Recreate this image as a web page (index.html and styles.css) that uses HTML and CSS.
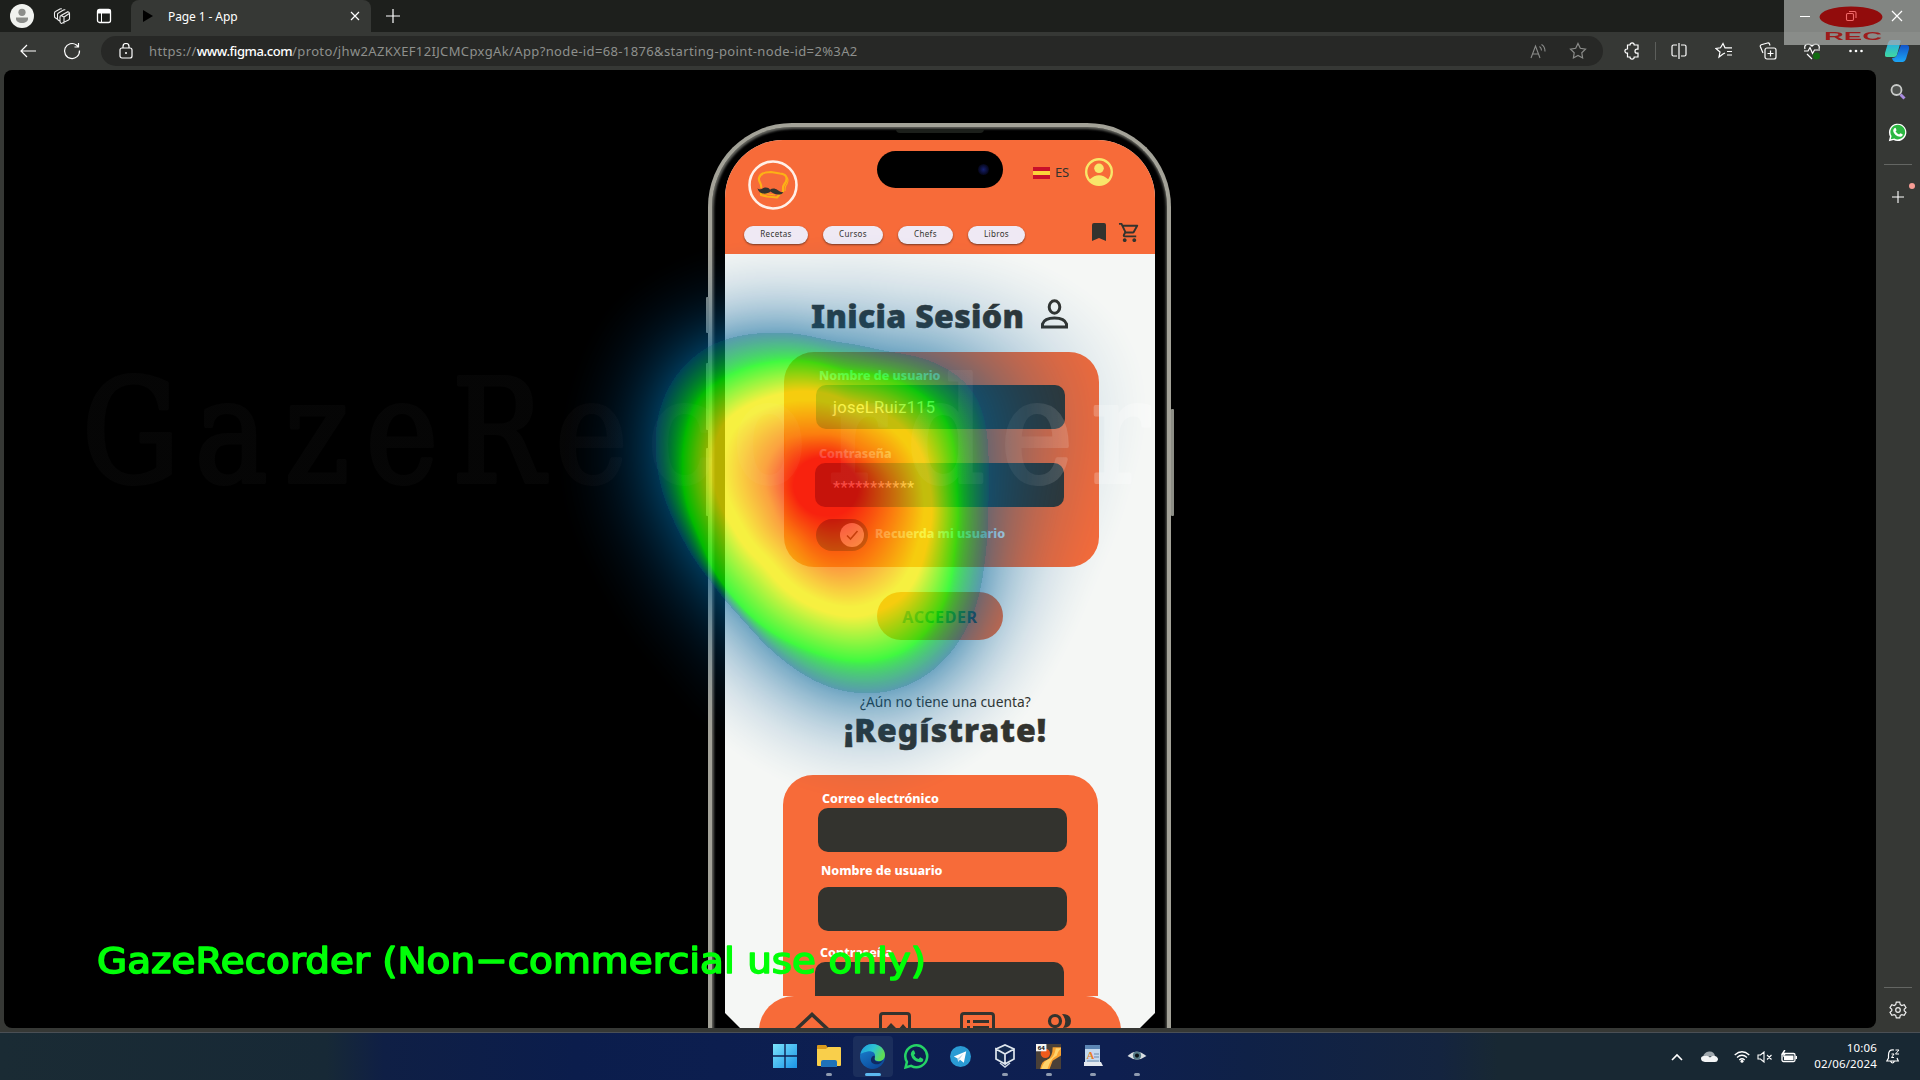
FILE: index.html
```html
<!DOCTYPE html>
<html lang="es">
<head>
<meta charset="utf-8">
<title>Page 1 - App</title>
<link rel="stylesheet" href="styles.css">
</head>
<body>
<div class="desktop">
  <header class="tabbar">
    <svg class="ic avatar" width="24" height="24" viewBox="0 0 24 24"><circle cx="12" cy="12" r="12" fill="#f0f2ef"/><circle cx="12" cy="8.3" r="3.6" fill="#8b8d8a"/><path d="M6 13.5h12v1.5c0 2.300-2.500 4-6 4s-6-1.700-6-4z" fill="#8b8d8a"/></svg>
    <svg class="ic" width="18" height="18" viewBox="0 0 18 18"><path d="M5 12.500l-2.500-1.500q-1-.5-1-1.500V6q0-1 1-1.500L7 2q1-.5 1.800 0M7.500 14.500L5.500 13.300q-1-.5-1-1.500V7.500q0-1 1-1.500L10.500 3q1-.5 1.800 0M8 8.500q-1 .5-1 1.500v4.500q0 1.500 1.500 2L15.500 13q1-.5 1-1.500V6.500q0-1.500-1.500-1.800zM8 8.500l3 1.500v6.500M11 10l5.300-3.500" fill="none" stroke="#eee" stroke-width="1.100"/></svg>
    <svg class="ic" width="16" height="16" viewBox="0 0 16 16"><rect x="1.500" y="1.500" width="13" height="13" rx="2" fill="none" stroke="#fff" stroke-width="1.300"/><path d="M1.500 1.500h13v4h-13z" fill="#fff"/><path d="M5.500 5v9" stroke="#fff"/></svg>
    <div class="tab">
      <svg width="10" height="12" viewBox="0 0 10 12"><path d="M0 0l10 6-10 6z" fill="#000"/></svg>
      <span class="tab-title">Page 1 - App</span>
      <svg width="10" height="10" viewBox="0 0 10 10"><path d="M1 1l8 8M9 1l-8 8" stroke="#fff" stroke-width="1.200"/></svg>
    </div>
    <svg class="newtab" width="14" height="14" viewBox="0 0 14 14"><path d="M7 0v14M0 7h14" stroke="#fff" stroke-width="1.200"/></svg>
  </header>

  <div class="toolbar">
    <svg width="16" height="14" viewBox="0 0 16 14"><path d="M16 7H1M7 1L1 7l6 6" fill="none" stroke="#fff" stroke-width="1.200"/></svg>
    <svg class="reload" width="18" height="18" viewBox="0 0 18 18"><path d="M16.500 8.500a7.500 7.500 0 1 1-3-5.500L15 4.500M15.500 1v4h-4" fill="none" stroke="#fff" stroke-width="1.200"/></svg>
    <div class="address">
      <svg width="14" height="16" viewBox="0 0 14 16"><rect x="1" y="5" width="12" height="10" rx="2" fill="none" stroke="#fff" stroke-width="1.200"/><path d="M4 5V3.500a3 3 0 0 1 6 0V5" fill="none" stroke="#fff" stroke-width="1.200"/><circle cx="7" cy="10" r="1" fill="#fff"/></svg>
      <span class="url">https://<b>www.figma.com</b>/proto/jhw2AZKXEF12IJCMCpxgAk/App?node-id=68-1876&amp;starting-point-node-id=2%3A2</span>
      <svg width="17" height="16" viewBox="0 0 17 16"><path d="M1 15L5.500 3 10 15M2.700 11h5.700M9.500 3.500q2 1.500 2 4M11.500 1.500q3.500 2 3.500 7" fill="none" stroke="#8b8c8a" stroke-width="1.100"/></svg>
      <svg width="18" height="18" viewBox="0 0 18 18"><path d="M9 1.500l2.300 4.800 5.200.8-3.700 3.700.8 5.200L9 13.500 4.400 16l.8-5.200L1.500 7.100l5.200-.8z" fill="none" stroke="#8b8c8a" stroke-width="1.200"/></svg>
    </div>
    <div class="tools">
      <svg width="18" height="18" viewBox="0 0 18 18"><path d="M4.500 3H7a2.100 2.100 0 0 1 4.200 0H15v4.200h-1a2 2 0 0 0 0 4h1V15h-3.800a2.100 2.100 0 0 1-4.200 0H4.500v-3.800H4a2.100 2.100 0 0 1 0-4.200h.5z" fill="none" stroke="#fff" stroke-width="1.200"/></svg>
      <svg width="18" height="18" viewBox="0 0 18 18"><path d="M7 3H3.500Q2 3 2 4.500v8Q2 14 3.500 14H7M11 3h3.500Q16 3 16 4.500v8q0 1.500-1.500 1.500H11M9 1v16" fill="none" stroke="#fff" stroke-width="1.200"/></svg>
      <svg width="18" height="18" viewBox="0 0 18 18"><path d="M10 11l-2 1-4 3 1-5-4-3.500 4.500-.7L8 1.500l2 4.300h7M12 9.500h5M12 13h5" fill="none" stroke="#fff" stroke-width="1.200"/></svg>
      <svg width="18" height="18" viewBox="0 0 18 18"><rect x="6" y="6" width="11" height="11" rx="2" fill="none" stroke="#fff" stroke-width="1.200"/><path d="M11.500 8.500v6M8.500 11.500h6M4 11L1.300 4.500q-.3-1.300 1-1.800L8.500 1q1.500-.4 2 1l.5 1.500" fill="none" stroke="#fff" stroke-width="1.200"/></svg>
      <svg width="18" height="18" viewBox="0 0 18 18"><path d="M1 9h4l2-3.500 2.500 6L11.500 8H17M2 7C.5 2 6 .5 9 4c3-3.500 8.500-2 7 3M4 12l5 5" fill="none" stroke="#fff" stroke-width="1.200"/><circle cx="13.500" cy="14" r="3.500" fill="#106b10"/></svg>
      <svg width="18" height="18" viewBox="0 0 18 18"><circle cx="3.500" cy="9" r="1.300" fill="#fff"/><circle cx="9" cy="9" r="1.300" fill="#fff"/><circle cx="14.500" cy="9" r="1.300" fill="#fff"/></svg>
    </div>
    <i class="tool-divider"></i>
    <svg class="copilot" width="24" height="22" viewBox="0 0 24 22"><defs><linearGradient id="cp1" x1="0" y1="0" x2="0" y2="1"><stop offset="0" stop-color="#21a5f0"/><stop offset="1" stop-color="#40d8a0"/></linearGradient><linearGradient id="cp2" x1="0" y1="0" x2="0" y2="1"><stop offset="0" stop-color="#1253c8"/><stop offset="1" stop-color="#1ba5f5"/></linearGradient></defs><path d="M6 0h8q2 0 1.500 2L12 15q-.5 2-3 2H2q-3 0-2-4L3 3q1-3 3-3z" fill="url(#cp1)"/><path d="M16 5h5q4 0 3 4l-3 10q-1 3-3 3h-7q-3 0-4-4 4 0 5-3z" fill="url(#cp2)"/></svg>
  </div>

  <div class="middle">
    <main class="viewport">
      <div class="phone">
        <i class="side-btn b1"></i><i class="side-btn b2"></i><i class="side-btn b3"></i><i class="side-btn b4"></i>
        <i class="speaker"></i>
        <div class="screen">
          <div class="app-head">
            <div class="island"><i></i></div>
            <div class="head-top">
              <svg width="50" height="50" viewBox="0 0 50 50"><circle cx="25" cy="25" r="23.500" fill="#f76b39" stroke="#fff0e8" stroke-width="2.600"/><path d="M13 28c1.500-4-3-6-2-10 1.500-6 8-6 12-6l9 1.500c6 .5 7.500 3.500 6 8-1.500 3-3 3-3 7v4M13 30v5l6 1.500 10 1 4-5" fill="none" stroke="#fcb116" stroke-width="2.200" stroke-linejoin="round"/><path d="M36 15c4 2 5 5 3 9-2 2-2 4-2 7M13 33l14 2" fill="none" stroke="#fcb116" stroke-width="1.100"/><path d="M9.500 28c1.500 2.500 4 1 6 0 3-1 5.500 0 6.500 1.800 2-1.800 5-1.800 7.500.2 2 1.500 4 2.500 6 2-1.500 3.500-8.500 3.500-13-.5-4 3.500-12 3-13-3.500z" fill="#33332e"/></svg>
              <div class="lang"><i class="flag"></i><span>ES</span></div>
              <svg class="account" width="28" height="28" viewBox="0 0 28 28"><circle cx="14" cy="14" r="12.800" fill="#f76b39" stroke="#f8e66a" stroke-width="2.400"/><circle cx="14" cy="10.300" r="4.800" fill="#f8e66a"/><path d="M4.500 21.500q9.500-8.500 19 0-3.500 5.500-9.500 5.500t-9.500-5.500z" fill="#f8e66a"/></svg>
            </div>
            <nav class="pills">
              <span class="p1">Recetas</span><span class="p2">Cursos</span><span class="p3">Chefs</span><span class="p4">Libros</span>
              <svg class="bookmark" width="14" height="18" viewBox="0 0 14 18"><path d="M0 2q0-2 2-2h10q2 0 2 2v16l-7-3-7 3z" fill="#33332e"/></svg>
              <svg class="cart" width="23" height="23" viewBox="0 0 24 24"><path d="M15.550 13c.75 0 1.410-.41 1.750-1.030l3.580-6.490A.996.996 0 0 0 20.010 4H5.210l-.94-2H1v2h2l3.600 7.590-1.350 2.440C4.520 15.370 5.480 17 7 17h12v-2H7l1.100-2h7.450zM6.160 6h12.150l-2.760 5H8.530L6.160 6zM7 18c-1.100 0-1.990.9-1.990 2S5.900 22 7 22s2-.9 2-2-.9-2-2-2zm10 0c-1.100 0-1.990.9-1.990 2s.89 2 1.990 2 2-.9 2-2-.9-2-2-2z" fill="#33332e"/></svg>
            </nav>
          </div>
          <div class="app-body">
            <div class="title-row">
              <h1>Inicia Sesión</h1>
              <svg width="27" height="30" viewBox="0 0 27 30"><ellipse cx="13.500" cy="8" rx="5.300" ry="6.200" fill="none" stroke="#33332e" stroke-width="3"/><path d="M1.500 28v-3q2-6 12-6t12 6v3z" fill="none" stroke="#33332e" stroke-width="3"/></svg>
            </div>
            <section class="card login">
              <label class="l-user">Nombre de usuario</label>
              <div class="field f-user">joseLRuiz115</div>
              <label class="l-pass">Contraseña</label>
              <div class="field f-pass">***********</div>
              <div class="remember">
                <span class="toggle"><svg width="24" height="24" viewBox="0 0 24 24"><circle cx="12" cy="12" r="12" fill="#fff"/><path d="M7 12.500l3.500 3.500 7-8" fill="none" stroke="#33332e" stroke-width="1.600"/></svg></span>
                <span class="rem-text">Recuerda mi usuario</span>
              </div>
            </section>
            <div class="enter">ACCEDER</div>
            <p class="ask">¿Aún no tiene una cuenta?</p>
            <h2>¡Regístrate!</h2>
            <section class="card signup">
              <label class="l-mail">Correo electrónico</label>
              <div class="field f-mail"></div>
              <label class="l-name">Nombre de usuario</label>
              <div class="field f-name"></div>
              <label class="l-key">Contraseña</label>
              <div class="field f-key"></div>
            </section>
          </div>
          <nav class="dock">
            <svg class="d1" width="34" height="24" viewBox="0 0 34 24"><path d="M1 17.500L17 2.500l16 15" fill="none" stroke="#33332e" stroke-width="3.500"/><path d="M10 24l7-7 7 7z" fill="#f76b39"/></svg>
            <svg class="d2" width="32" height="24" viewBox="0 0 32 24"><path d="M1.500 24V4q0-2.500 2.500-2.500h24q2.500 0 2.500 2.500v20" fill="none" stroke="#33332e" stroke-width="3"/><path d="M4 20l8-9 7 7 5-6 6 7v5H4z" fill="#33332e"/></svg>
            <svg class="d3" width="35" height="24" viewBox="0 0 35 24"><path d="M1.500 24V4q0-2.500 2.500-2.500h27q2.500 0 2.500 2.500v20M7 9.500h3M13 9.500h16M7 15.500h3M13 15.500h16" fill="none" stroke="#33332e" stroke-width="3"/></svg>
            <svg class="d4" width="26" height="24" viewBox="0 0 26 24"><circle cx="8" cy="9" r="5.500" fill="none" stroke="#33332e" stroke-width="3.200"/><path d="M15 2q9 0 9 7t-8 7q5-7-1-14z" fill="#33332e"/></svg>
          </nav>
        </div>
      </div>
    </main>
    <aside class="sidebar">
      <svg class="s1" width="18" height="18" viewBox="0 0 18 18"><circle cx="7.500" cy="7" r="5" fill="#8c8e8c" fill-opacity=".3" stroke="#c9cbc9" stroke-width="1.800"/><path d="M11.500 11.500l4 4" stroke="#a98be0" stroke-width="3"/></svg>
      <svg class="s2" width="19" height="19" viewBox="0 0 24 24"><path d="M1 23l1.500-6A11 11 0 1 1 7 21.500z" fill="#fff"/><path d="M3.500 20.500l1-4A9.300 9.300 0 1 1 8 19.700z" fill="#2cb742"/><path d="M8 6.500q1.500-1 2 .5l.8 2q-.8 1-1.300 1.500 1.500 3 4.500 4l1.500-1.700 3 1.500q.3 3-3 3.200Q8 16.500 6.500 10q0-2 1.500-3.500z" fill="#fff"/></svg>
      <i class="rule r1"></i>
      <div class="plus"><svg width="12" height="12" viewBox="0 0 12 12"><path d="M6 0v12M0 6h12" stroke="#fff" stroke-width="1.100"/></svg><i></i></div>
      <i class="rule r2"></i>
      <svg class="gear" width="18" height="18" viewBox="0 0 18 18"><path d="M7.300 1.200h3.400l.6 2.400 1.500.9 2.400-.8L17 6.700 15.200 8.300v1.400l1.800 1.700-1.800 3-2.400-.8-1.500.9-.6 2.300H7.300l-.6-2.300-1.500-.9-2.400.8-1.800-3 1.800-1.700V8.300L1 6.700l1.800-3 2.400.8 1.500-.9z" fill="none" stroke="#eee" stroke-width="1.200"/><circle cx="9" cy="9" r="2.300" fill="none" stroke="#eee" stroke-width="1.200"/></svg>
    </aside>
  </div>

  <footer class="taskbar">
    <div class="apps">
      <div class="app"><svg width="24" height="24" viewBox="0 0 24 24"><defs><linearGradient id="w" x1="0" y1="0" x2="1" y2="1"><stop offset="0" stop-color="#7be3fb"/><stop offset="1" stop-color="#1a94e6"/></linearGradient></defs><path d="M0 0h11.300v11.300H0zM12.700 0H24v11.300H12.700zM0 12.700h11.300V24H0zM12.700 12.700H24V24H12.700z" fill="url(#w)"/></svg></div>
      <div class="app"><svg width="24" height="24" viewBox="0 0 24 24"><path d="M0 2q0-1 1-1h8l2 3v6H0z" fill="#d99a1c"/><path d="M0 5h9l2-2h12q1 0 1 1v17q0 1-1 1H1q-1 0-1-1z" fill="#f9cf4b"/><path d="M4 23v-5q0-2 2-2h12q2 0 2 2v5z" fill="#1f72b8"/></svg><i></i></div>
      <div class="app active"><svg width="25" height="25" viewBox="0 0 24 24"><defs><linearGradient id="e1" x1="0" y1="0" x2="1" y2=".4"><stop offset="0" stop-color="#1e9be0"/><stop offset=".55" stop-color="#2cc3d3"/><stop offset="1" stop-color="#5fdc55"/></linearGradient><linearGradient id="e2" x1="0" y1="0" x2=".6" y2="1"><stop offset="0" stop-color="#1b86d4"/><stop offset="1" stop-color="#0c4b9c"/></linearGradient></defs><circle cx="12" cy="12" r="12" fill="url(#e2)"/><path d="M.5 9.500C2 3 7 0 12 0c7 0 12 5 12 10.500 0 4-3 6-6 6-3.500 0-4.500-1.500-4-3 1-1.500 1-6-4-6.500C6 7 2 9 .5 9.500z" fill="url(#e1)"/><path d="M14 13.500q-.5 3.500 4 3.500 3 0 4.500-2-3 5-8 4.500-4.500-1-4-5 .5-3 3-3.500 1.500 1 .5 2.500z" fill="#0f2a63"/></svg><i></i></div>
      <div class="app"><svg width="25" height="25" viewBox="0 0 24 24"><path d="M1.500 22.500l1.300-5.300A10.500 10.500 0 1 1 6.800 21z" fill="none" stroke="#25d366" stroke-width="2.400"/><path d="M8 6.500q1.500-1 2 .5l.8 2q-.8 1-1.300 1.500 1.500 3 4.500 4l1.500-1.700 3 1.500q.3 3-3 3.200Q8 16.500 6.500 10q0-2 1.500-3.500z" fill="#25d366"/></svg></div>
      <div class="app"><svg width="21" height="21" viewBox="0 0 22 22"><circle cx="11" cy="11" r="11" fill="#2a9bd4"/><path d="M4 11l13-5.500-2.500 12-4-3-2 2-.5-3.500z" fill="#fff"/><path d="M8 13l6-5-4 6-1.500 2.500z" fill="#b9d8ea"/></svg></div>
      <div class="app"><svg width="20" height="24" viewBox="0 0 20 24"><path d="M1 5l9-4 9 4-9 5zM1 5v10l9 5V10zM19 5v10l-9 5" fill="#152b52" stroke="#dfe6ee" stroke-width="1.700"/><path d="M5 19l5 4 5-4" fill="none" stroke="#cfd9e6" stroke-width="1.500"/></svg><i></i></div>
      <div class="app"><svg width="25" height="25" viewBox="0 0 24 24"><path d="M0 0h24v24H0z" fill="#4a4038"/><circle cx="9" cy="9" r="4.500" fill="#f05a1c"/><path d="M24 3v8l-8 5-3 8H4q1-8 7-9 5-3 5-12z" fill="#f8a230"/><path d="M24 4q-3 3-4 7-6 3-9 13H5q3-9 9-10 4-3 5-10z" fill="#ffd36b"/><path d="M0 0h10v7H0z" fill="#f4f4f4"/><text x="5" y="6" text-anchor="middle" class="n64">64</text></svg><i></i></div>
      <div class="app"><svg width="20" height="24" viewBox="0 0 20 24"><path d="M2 1h15v19H2z" fill="#c4d9ee"/><path d="M2 1h15v4H2z" fill="#5c86b5"/><path d="M1 18h17l2 4H1z" fill="#e4e8ee"/><path d="M11 10h5M11 13h5M4 17h12" stroke="#6c8aaa"/><text x="7.500" y="15" text-anchor="middle" class="wp">A</text></svg><i></i></div>
      <div class="app"><svg width="20" height="12" viewBox="0 0 22 14"><path d="M0 7Q10-3 22 7 11 15 0 7z" fill="#d9dee2"/><circle cx="11" cy="6.500" r="4.800" fill="#557a86"/><circle cx="11" cy="6.500" r="2.400" fill="#0c1319"/></svg><i></i></div>
    </div>
    <div class="tray">
      <svg class="t1" width="12" height="8" viewBox="0 0 12 8"><path d="M1 7l5-5 5 5" fill="none" stroke="#fff" stroke-width="1.600"/></svg>
      <svg class="t2" width="17" height="11" viewBox="0 0 17 11"><path d="M2 6q1-5 6-5.500Q13 0 14 5z" fill="#9ea7ad"/><path d="M4 11q-4-.5-4-3.500T4 5q3-1 5 1.500Q11 4 14 5q3 1 3 3.500-.5 2.500-3 2.500z" fill="#f3f5f6"/></svg>
      <svg class="t3" width="16" height="12" viewBox="0 0 16 12"><path d="M.7 4Q8-2.500 15.300 4M3 6.500q5-4.500 10 0M5.300 9q2.700-2.500 5.400 0" fill="none" stroke="#fff" stroke-width="1.300"/><circle cx="8" cy="10.300" r="1.500" fill="#fff"/></svg>
      <svg class="t4" width="16" height="12" viewBox="0 0 16 12"><path d="M1 4h2.500L7 1v10L3.500 8H1zM10 4l4.500 4.500M14.500 4L10 8.500" fill="none" stroke="#fff" stroke-width="1.100"/></svg>
      <svg class="t5" width="17" height="13" viewBox="0 0 17 13"><rect x="1" y="3.500" width="13" height="8" rx="1.500" fill="none" stroke="#fff" stroke-width="1.300"/><path d="M3 5.500h9.500v4.500H3zM14.500 6H16v3h-1.500zM3 0L0 4.500h2.500L1.500 8 5 3.500H2.800L4.500 0z" fill="#fff"/></svg>
      <div class="clock"><span>10:06</span><span>02/06/2024</span></div>
      <svg class="t6" width="14" height="15" viewBox="0 0 14 15"><path d="M8 1Q2.500 0 2.500 6v3L.8 12h11.500L11 9M4.500 12q2 4 4 0" fill="none" stroke="#fff" stroke-width="1.200"/><path d="M5.500 5H8L5.500 8.500H8M9.500 1h3.500L9.500 5H13" fill="none" stroke="#fff"/></svg>
    </div>
  </footer>

  <canvas class="heatmap" width="700" height="640"></canvas>
  <svg class="watermark" width="1920" height="1080" viewBox="0 0 1920 1080">
    <defs>
      <linearGradient id="fade" gradientUnits="userSpaceOnUse" x1="640" y1="0" x2="1155" y2="0"><stop offset="0" stop-color="#fff" stop-opacity=".022"/><stop offset=".75" stop-color="#fff" stop-opacity=".06"/><stop offset="1" stop-color="#fff" stop-opacity=".35"/></linearGradient>
      <mask id="wmmask" maskUnits="userSpaceOnUse" x="0" y="340" width="1155" height="180"><rect x="0" y="340" width="1155" height="180" fill="url(#fade)"/></mask>
    </defs>
    <g mask="url(#wmmask)"><g transform="scale(.85 1)"><text y="482" class="wm" x="154 272 373 473 586 696 802 905 1008 1113 1220 1318">GazeRecorder</text></g></g>
    <text class="notice" x="97" y="973" textLength="829" lengthAdjust="spacingAndGlyphs" xml:space="preserve">GazeRecorder (Non−commercial use only)</text>
  </svg>

  <div class="window-ctl">
    <svg width="136" height="45" viewBox="0 0 136 45"><rect width="136" height="45" fill="#a9aba8" fill-opacity=".73"/><ellipse cx="67" cy="17" rx="31.500" ry="10.500" fill="#920c0c"/><path d="M16 16.500h10M108 11l10 10M118 11l-10 10" stroke="#fff" stroke-width="1.200"/><path d="M65 11.500h5.500q1.500 0 1.500 1.500v5" fill="none" stroke="#f26a6a" stroke-width="1.100"/><rect x="62.500" y="13.500" width="7" height="7" rx="1.200" fill="none" stroke="#f26a6a" stroke-width="1.100"/><text class="rec" x="40" y="40" textLength="58" lengthAdjust="spacingAndGlyphs">REC</text></svg>
  </div>
</div>
<script src="heatmap.js"></script>
</body>
</html>
```

FILE: styles.css
```css
* { box-sizing: border-box; }
body { margin: 0; overflow: hidden; background: #000; font-family: "Noto Sans", "Open Sans", sans-serif; }
svg { display: block; flex: none; }
.desktop { position: relative; width: 1920px; height: 1080px; display: flex; flex-direction: column; overflow: hidden; }

.tabbar { height: 32px; flex: none; background: #1d1f1c; display: flex; align-items: center; padding-left: 10px; }
.tabbar .ic { margin-right: 25px; }
.tabbar .avatar { margin-right: 19px; }
.tabbar .tab { margin-left: -6px; }
.tab { height: 32px; width: 240px; background: #363835; border-radius: 8px 8px 0 0; display: flex; align-items: center; padding: 0 11px 0 12px; }
.tab-title { flex: 1; margin-left: 15px; color: #fff; font-size: 12px; letter-spacing: -.1px; }
.newtab { margin-left: 15px; }

.toolbar { position: relative; height: 38px; flex: none; background: #363835; display: flex; align-items: center; padding-left: 20px; }
.reload { margin-left: 27px; }
.address { width: 1502px; height: 30px; margin-left: 20px; border-radius: 15px; background: #272826; display: flex; align-items: center; padding: 0 16px 0 18px; gap: 22px; }
.address .url { flex: 1; margin-left: -6px; font-size: 13px; color: #8e908d; letter-spacing: .36px; white-space: nowrap; }
.url b { color: #fff; font-weight: 500; letter-spacing: -.4px; }
.tools { display: flex; gap: 26.300px; margin-left: 20px; }
.tools svg:first-child { margin-right: 3px; }
.tool-divider { position: absolute; left: 1655px; top: 10px; width: 1px; height: 18px; background: #5c5e5b; }
.copilot { margin-left: 20px; }

.middle { height: 963px; flex: none; background: #363835; display: flex; border-bottom: 1px solid #4a4f55; }
.viewport { width: 1872px; height: 958px; margin-left: 4px; background: #000; border-radius: 8px; overflow: hidden; display: flex; justify-content: flex-start; align-items: flex-start; padding: 53px 0 0 704px; }
.sidebar { flex: 1; display: flex; flex-direction: column; align-items: center; padding-right: 1px; }
.s1 { margin-top: 13px; }
.s2 { margin-top: 22px; }
.rule { width: 28px; height: 1px; background: #646663; flex: none; }
.r1 { margin-top: 22px; }
.plus { position: relative; margin-top: 26px; }
.plus i { position: absolute; right: -11px; top: -8px; width: 6px; height: 6px; border-radius: 50%; background: #f79d95; }
.r2 { margin-top: 784px; }
.gear { margin-top: 13px; }

.phone { position: relative; flex: none; width: 463px; height: 960px; padding: 13px 13px 0; border: 4px solid #a3a298; border-bottom: 0; border-radius: 84px 84px 0 0; background: #000; box-shadow: inset 0 0 3px 1px #55554f, inset 1px 1px 3px 0 #8d8f8a; }
.side-btn { position: absolute; width: 3px; background: #8d8e86; border-radius: 1px; }
.b1 { left: -6px; top: 170px; height: 36px; }
.b2 { left: -6px; top: 236px; height: 67px; }
.b3 { left: -6px; top: 321px; height: 68px; }
.b4 { right: -7px; top: 282px; height: 107px; }
.speaker { position: absolute; left: 184px; top: 2px; width: 88px; height: 4px; border-radius: 0 0 4px 4px; background: #1c1f1b; }
.screen { width: 430px; height: 888px; background: #f5f7f5; border-radius: 58px 58px 0 0; overflow: hidden; display: flex; flex-direction: column; position: relative; clip-path: polygon(0 0, 100% 0, 100% 873px, calc(100% - 15px) 888px, 15px 888px, 0 873px); }
.app-head { height: 114px; flex: none; background: #f76b39; position: relative; display: flex; flex-direction: column; }
.island { position: absolute; left: 152px; top: 11px; width: 126px; height: 37px; border-radius: 19px; background: #000; }
.island i { position: absolute; right: 14px; top: 13px; width: 11px; height: 11px; border-radius: 50%; background: radial-gradient(#16206e, #05061a 70%); }
.head-top { display: flex; height: 86px; padding-left: 23px; align-items: flex-start; }
.head-top > svg:first-child { margin-top: 20px; }
.lang { display: flex; align-items: center; gap: 5px; margin: 24px 0 0 235px; font: 13px/17px "Noto Sans", sans-serif; color: #33332e; width: 52px; letter-spacing: -.3px; }
.flag { width: 17px; height: 12px; background: linear-gradient(#c8102a 30%, #fbd33b 30% 66%, #c8102a 66%); }
.account { margin-top: 18px; }
.pills { display: flex; padding-left: 19px; }
.pills span { height: 18px; border-radius: 9px; background: #efe9f4; box-shadow: 0 1px 2px #7a3a24; font: 400 8px/16px "Noto Sans", sans-serif; letter-spacing: .35px; color: #33332e; text-align: center; }
.p1 { width: 64px; } .p2 { width: 60px; margin-left: 15px; } .p3 { width: 55px; margin-left: 15px; } .p4 { width: 57px; margin-left: 15px; }
.bookmark { margin: -3px 0 0 67px; }
.cart { margin: -5px 0 0 12px; }

.app-body { display: flex; flex-direction: column; height: 742px; flex: none; overflow: hidden; color: #33332e; }
.title-row { display: flex; margin: 43px 0 0 86px; height: 36px; align-items: flex-start; flex: none; }
h1, h2 { margin: 0; font-weight: 900; font-size: 32px; line-height: 36px; white-space: nowrap; -webkit-text-stroke: .5px #33332e; }
h1 { width: 230px; letter-spacing: .35px; margin-top: 1px; }
.title-row svg { margin-top: 2px; }
.card { background: #f76b39; width: 315px; display: flex; flex-direction: column; color: #fff; flex: none; }
.card label, .rem-text { font-weight: 800; font-size: 12.500px; line-height: 16px; white-space: nowrap; }
.field { width: 249px; height: 44px; border-radius: 10px; background: #33332e; flex: none; padding-left: 17px; font: 16.500px/46px Roboto, sans-serif; letter-spacing: .3px; }
.login { margin: 19px 0 0 59px; height: 215px; border-radius: 30px; padding: 16px 0 0 31px; }
.l-user { margin-left: 4px; } .f-user { margin: 1px 0 0 1px; }
.l-pass { margin: 17px 0 0 4px; } .f-pass { margin: 1px 0 0; padding-left: 18px; line-height: 50px; }
.remember { display: flex; margin: 12px 0 0 1px; }
.toggle { width: 52px; height: 32px; border-radius: 16px; background: #33332e; padding: 4px 0 0 24px; }
.rem-text { margin: 7px 0 0 7px; }
.enter { flex: none; width: 126px; height: 48px; border-radius: 24px; background: #f76b39; margin: 25px 0 0 152px; text-align: center; font-weight: 700; font-size: 16px; line-height: 51px; letter-spacing: .6px; }
.ask { margin: 52px 0 0 135px; font-size: 13.800px; line-height: 20px; white-space: nowrap; flex: none; }
h2 { margin: 0 0 0 119px; letter-spacing: 1px; flex: none; }
.signup { margin: 27px 0 0 58px; height: 240px; border-radius: 30px 30px 0 0; padding: 16px 0 0 32px; }
.l-mail { margin-left: 7px; } .f-mail { margin: 1px 0 0 3px; }
.l-name { margin: 11px 0 0 6px; } .f-name { margin: 8px 0 0 3px; }
.l-key { margin: 14px 0 0 5px; } .f-key { margin: 1px 0 0; }
.dock { flex: none; width: 362px; height: 70px; margin-left: 34px; border-radius: 36px; background: #f76b39; display: flex; padding: 16px 0 0 36px; }
.d2 { margin-left: 50px; } .d3 { margin-left: 49px; } .d4 { margin-left: 52px; }

.taskbar { height: 47px; flex: none; position: relative; background: linear-gradient(90deg, #1a2b34 0, #172936 17%, #0f1f45 20%, #0b1d4c 30%, #0d1f52 45%, #0e1f50 58%, #0f2147 65%, #14243f 75%, #182833 78%); display: flex; justify-content: space-between; }
.apps { display: flex; gap: 4px; margin-left: 764.500px; padding-top: 3px; }
.app { position: relative; width: 40px; height: 41px; display: flex; align-items: center; justify-content: center; border-radius: 4px; padding-bottom: 1px; }
.app.active { background: #1b2e5c; }
.app i { position: absolute; bottom: 1px; width: 6px; height: 3px; border-radius: 2px; background: #8f9bb0; }
.app.active i { width: 16px; background: #5cb9f0; }
.n64 { font: bold 6px "Liberation Sans", sans-serif; }
.wp { font: bold 11px "Liberation Serif", serif; fill: #e8812a; }
.tray { display: flex; align-items: center; color: #fff; padding-right: 20px; }
.t2 { margin-left: 18px; } .t3 { margin-left: 16px; } .t4 { margin-left: 7px; } .t5 { margin-left: 8px; }
.clock { display: flex; flex-direction: column; align-items: flex-end; width: 79px; font-size: 11.500px; line-height: 16px; letter-spacing: .15px; margin: -2px 9px 0 0; }

.heatmap { position: absolute; left: 520px; top: 220px; pointer-events: none; }
.watermark { position: absolute; left: 0; top: 0; pointer-events: none; }
.wm { font: 144px "DejaVu Serif", serif; fill: #fff; stroke: #fff; stroke-width: 4; stroke-linejoin: round; text-anchor: middle; }
.notice { font: 36px "DejaVu Sans", sans-serif; fill: #00ff08; stroke: #00ff08; stroke-width: 1.600; stroke-linejoin: round; }
.window-ctl { position: absolute; right: 0; top: 0; width: 136px; height: 45px; }
.rec { font: bold 10px "Liberation Sans", sans-serif; fill: #9d1c1c; }
```

FILE: heatmap.js
```js
// Gaze density: closed iso-contours around the fixation centre, from hottest to coldest.
const centre = [826, 487];
const contours = [
  [[858,487],[846,510],[825,515],[803,506],[793,487],[800,466],[820,457],[846,466]],
  [[894,487],[884,532],[860,566],[835,571],[797,541],[772,505],[764,470],[783,440],[814,434],[860,449]],
  [[929,487],[925,545],[905,595],[858,617],[810,605],[765,565],[732,525],[712,470],[722,423],[772,396],[850,403],[910,435]],
  [[955,487],[953,550],[940,612],[908,650],[864,662],[800,646],[734,597],[700,537],[682,457],[698,395],[768,362],[845,372],[912,388],[942,412]],
  [[987,467],[986,513],[983,563],[975,607],[955,647],[925,677],[879,694],[830,688],[784,660],[745,620],[711,580],[679,530],[661,487],[655,447],[659,407],[676,373],[711,343],[761,333],[830,342],[883,352],[937,363],[964,380],[979,400],[986,430]],
  [[1130,487],[1095,580],[1060,660],[1000,745],[900,800],[800,790],[725,745],[660,675],[600,590],[560,490],[565,400],[610,300],[690,252],[800,240],[920,240],[1040,262],[1125,320],[1150,400]]
];
const N = 720;
const tables = contours.map(points => {
  const polar = points.map(([x, y]) => {
    const dx = x - centre[0], dy = y - centre[1];
    return [(Math.atan2(dy, dx) + 2 * Math.PI) % (2 * Math.PI), Math.hypot(dx, dy)];
  }).sort((a, b) => a[0] - b[0]);
  const raw = [];
  for (let i = 0; i < N; i++) {
    const a = i / N * 2 * Math.PI;
    let k = polar.findIndex(p => p[0] > a);
    if (k < 0) k = polar.length;
    const m = polar.length;
    const p0 = polar[(k - 1 + m) % m], p1 = polar[k % m];
    const a0 = k === 0 ? p0[0] - 2 * Math.PI : p0[0];
    const a1 = k === m ? p1[0] + 2 * Math.PI : p1[0];
    raw.push(p0[1] + (p1[1] - p0[1]) * (a - a0) / (a1 - a0));
  }
  return raw.map((_, i) => {
    let s = 0, w = 0;
    for (let j = -30; j <= 30; j++) {
      const g = Math.exp(-j * j / 220);
      s += raw[(i + j + N) % N] * g; w += g;
    }
    return s / w;
  });
});
// r, g, b, alpha at each contour
const ramp = [[248,10,0,.75],[252,132,0,.74],[246,238,0,.74],[0,250,0,.74],[0,103,135,.64]];
const mix = (a, b, t) => a.map((v, i) => v + (b[i] - v) * t);
const canvas = document.querySelector('.heatmap');
const ctx = canvas.getContext('2d');
const img = ctx.createImageData(700, 640);
for (let y = 0; y < 640; y++) {
  for (let x = 0; x < 700; x++) {
    const dx = x + 520 - centre[0], dy = y + 220 - centre[1];
    const r = Math.hypot(dx, dy);
    const f = (Math.atan2(dy, dx) / (2 * Math.PI) + 1) % 1 * N;
    const i0 = Math.floor(f) % N, i1 = (i0 + 1) % N, ft = f - Math.floor(f);
    const R = tables.map(t => t[i0] + (t[i1] - t[i0]) * ft);
    let c;
    if (r < R[0]) c = ramp[0];
    else if (r >= R[5]) c = [0, 0, 0, 0];
    else if (r >= R[4]) {
      const t = (r - R[4]) / (R[5] - R[4]);
      c = [0, 98 - 20 * t, 152, .54 * Math.exp(-2 * t) * (1 - t * t)];
    } else {
      let k = 0;
      while (r >= R[k + 1]) k++;
      let t = (r - R[k]) / (R[k + 1] - R[k]);
      if (k === 1) t = Math.min(1, t * 1.25);
      if (k === 3) t = Math.pow(t, .8);
      c = mix(ramp[k], ramp[k + 1], t);
    }
    const o = (y * 700 + x) * 4;
    img.data[o] = c[0]; img.data[o + 1] = c[1]; img.data[o + 2] = c[2]; img.data[o + 3] = c[3] * 255;
  }
}
ctx.putImageData(img, 0, 0);
```
